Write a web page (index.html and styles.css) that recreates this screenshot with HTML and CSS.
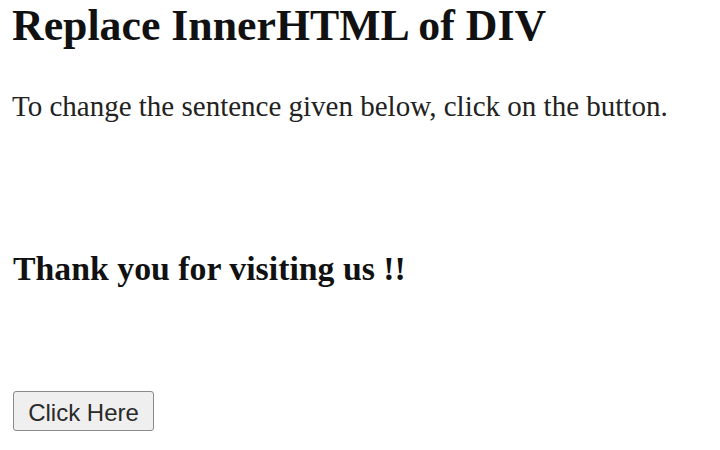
FILE: index.html
```html
<!DOCTYPE html>
<html>
<head>
<meta charset="utf-8">
<title>Replace InnerHTML of DIV</title>
<link rel="stylesheet" href="styles.css">
</head>
<body>
<h2 class="title">Replace InnerHTML of DIV</h2>
<p class="intro">To change the sentence given below, click on the button.</p>
<div class="message" id="message">
  <h3 class="thanks">Thank you for visiting us !!</h3>
</div>
<button class="action" type="button">Click Here</button>
</body>
</html>
```
FILE: styles.css
```css
html, body {
  background: #ffffff;
}
body {
  margin: 0;
  padding: 0 12px;
  font-family: "Liberation Serif", "Times New Roman", serif;
  color: #111111;
}
.title {
  font-size: 43.8px;
  font-weight: bold;
  line-height: 50px;
  margin: 0;
}
.intro {
  font-size: 29px;
  line-height: 34px;
  margin: 39px 0 0 0;
  color: #222222;
}
.message {
  padding: 126px 0 0 1px;
}
.thanks {
  font-size: 33.8px;
  line-height: 40px;
  margin: 0;
}
.action {
  display: block;
  box-sizing: border-box;
  margin: 102px 0 0 1px;
  width: 141px;
  height: 40px;
  font-family: "Liberation Sans", Arial, sans-serif;
  font-size: 24px;
  color: #2a2a2a;
  background: #efefef;
  border: 1.5px solid #8a8a8a;
  border-radius: 3px;
  padding: 4px 0 0 0;
}
```
